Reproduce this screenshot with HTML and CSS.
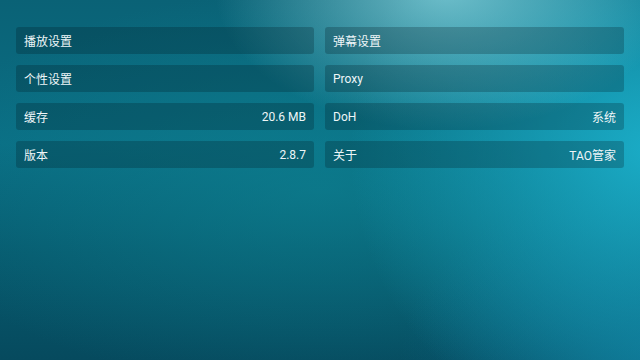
FILE: index.html
```html
<!DOCTYPE html>
<html lang="zh">
<head>
<meta charset="utf-8">
<link rel="stylesheet" href="styles.css">
</head>
<body>
<main class="screen">
  <div class="grid">
    <div class="item"><span>播放设置</span></div>
    <div class="item"><span>弹幕设置</span></div>
    <div class="item"><span>个性设置</span></div>
    <div class="item"><span>Proxy</span></div>
    <div class="item"><span>缓存</span><span>20.6 MB</span></div>
    <div class="item"><span>DoH</span><span>系统</span></div>
    <div class="item"><span>版本</span><span>2.8.7</span></div>
    <div class="item"><span>关于</span><span>TAO管家</span></div>
  </div>
</main>
</body>
</html>
```
FILE: styles.css
```css
html, body {
  margin: 0;
  padding: 0;
  width: 640px;
  height: 360px;
  overflow: hidden;
}
.screen {
  width: 640px;
  height: 360px;
  box-sizing: border-box;
  padding: 27px 16px 0 16px;
  font-family: Roboto, "Noto Sans CJK SC", sans-serif;
  color: #eef6f8;
  background:
    radial-gradient(ellipse 230px 140px at 445px -10px, rgba(135, 212, 222, 0.8), rgba(135, 212, 222, 0) 100%),
    radial-gradient(ellipse 300px 300px at 650px 150px, rgba(28, 178, 205, 0.9), rgba(28, 178, 205, 0) 100%),
    radial-gradient(ellipse 260px 180px at 660px 360px, rgba(12, 115, 150, 0.7), rgba(12, 115, 150, 0) 100%),
    radial-gradient(ellipse 420px 200px at 320px 190px, rgba(14, 135, 150, 0.55), rgba(14, 135, 150, 0) 100%),
    linear-gradient(180deg, #0a6276 0%, #0a6e84 40%, #075a6e 70%, #064a5e 100%);
}
.grid {
  display: grid;
  grid-template-columns: 298px 299px;
  column-gap: 11px;
  row-gap: 11px;
}
.item {
  height: 27px;
  box-sizing: border-box;
  padding: 0 8px;
  border-radius: 3px;
  background: rgba(0, 20, 30, 0.24);
  display: flex;
  align-items: center;
  justify-content: space-between;
  font-size: 12px;
}
```
